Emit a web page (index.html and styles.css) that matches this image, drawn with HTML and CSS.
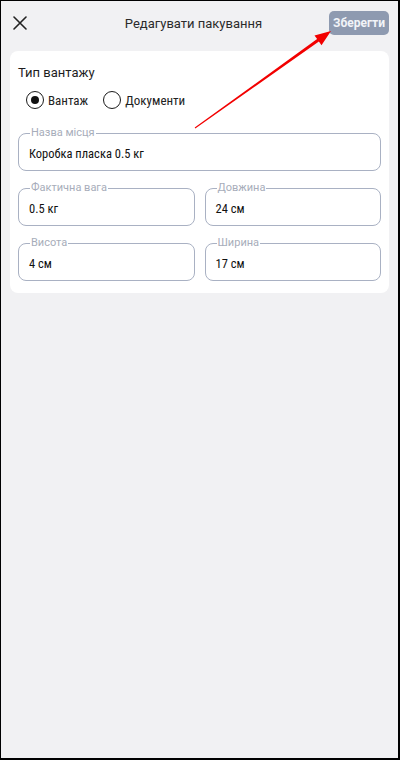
FILE: index.html
```html
<!DOCTYPE html>
<html lang="uk">
<head>
<meta charset="utf-8">
<link rel="stylesheet" href="styles.css">
</head>
<body>
<div class="frame">
  <header class="topbar">
    <button class="close" aria-label="Закрити">
      <svg width="14" height="14" viewBox="0 0 14 14"><path d="M1 1L13 13M13 1L1 13" stroke="#222" stroke-width="1.6" stroke-linecap="round"/></svg>
    </button>
    <div class="title">Редагувати пакування</div>
    <button class="save">Зберегти</button>
  </header>

  <main class="card">
    <div class="section-title">Тип вантажу</div>
    <div class="radios">
      <label class="radio"><span class="dot checked"></span><span class="rtext">Вантаж</span></label>
      <label class="radio"><span class="dot"></span><span class="rtext">Документи</span></label>
    </div>

    <div class="field">
      <span class="flabel">Назва місця</span>
      <span class="fvalue">Коробка пласка 0.5 кг</span>
    </div>

    <div class="grid">
      <div class="field">
        <span class="flabel">Фактична вага</span>
        <span class="fvalue">0.5 кг</span>
      </div>
      <div class="field">
        <span class="flabel">Довжина</span>
        <span class="fvalue">24 см</span>
      </div>
      <div class="field">
        <span class="flabel">Висота</span>
        <span class="fvalue">4 см</span>
      </div>
      <div class="field">
        <span class="flabel">Ширина</span>
        <span class="fvalue">17 см</span>
      </div>
    </div>
  </main>

  <svg class="arrow" width="400" height="760" viewBox="0 0 400 760">
    <polygon points="195.3,128.4 318.9,41.5 321.5,45.2 331,31 314.5,35.4 317.1,39.1 194.7,127.6" fill="#f20000"/>
  </svg>
</div>
</body>
</html>
```

FILE: styles.css
```css
* { box-sizing: border-box; }
html, body { margin: 0; padding: 0; }
body {
  font-family: Roboto, "Noto Sans", Arial, sans-serif;
  color: #1a1a1a;
}
.frame {
  position: relative;
  width: 400px;
  height: 760px;
  background: #f1f1f3;
  border-top: 1px solid #000;
  border-left: 1px solid #000;
  border-right: 2px solid #000;
  border-bottom: 2px solid #000;
  overflow: hidden;
}
.topbar {
  height: 50px;
  display: flex;
  align-items: center;
  padding: 0 9px 6px 11px;
}
.close {
  width: 16px;
  height: 16px;
  padding: 0;
  border: 0;
  background: transparent;
  display: flex;
  align-items: center;
  justify-content: center;
}
.title {
  flex: 1;
  text-align: center;
  font-size: 13px;
  color: #2b2b2b;
  padding-left: 30px;
}
.save {
  width: 60px;
  height: 24px;
  border: 0;
  border-radius: 5px;
  background: #8e9ab0;
  color: #f2f4f8;
  font-family: Roboto, Arial, sans-serif;
  font-weight: 700;
  font-size: 12px;
  padding: 0;
}
.card {
  margin: 0 9px;
  background: #fff;
  border-radius: 8px;
  padding: 13px 8px 12px;
  display: flex;
  flex-direction: column;
}
.section-title {
  font-size: 13px;
  line-height: 18px;
  color: #1e1e1e;
}
.radios {
  display: flex;
  gap: 15px;
  margin: 7px 0 0 8px;
  height: 22px;
  align-items: center;
}
.radio {
  display: flex;
  align-items: center;
  gap: 4px;
  color: #222;
}
.rtext {
  font-size: 13px;
  font-stretch: 75%;
}
.dot {
  width: 18px;
  height: 18px;
  border: 1.5px solid #1b1b1b;
  border-radius: 50%;
  display: flex;
  align-items: center;
  justify-content: center;
}
.dot.checked::after {
  content: "";
  width: 8px;
  height: 8px;
  border-radius: 50%;
  background: #111;
}
.field {
  position: relative;
  height: 38px;
  border: 1px solid #a9b1c3;
  border-radius: 8px;
  display: flex;
  align-items: center;
  padding: 2px 10px 0;
  margin-top: 22px;
}
.flabel {
  position: absolute;
  top: -7px;
  left: 11px;
  padding: 0 1px;
  background: #fff;
  font-size: 11px;
  line-height: 12px;
  color: #a7adba;
}
.fvalue {
  font-size: 12.5px;
  font-stretch: 75%;
  color: #111;
}
.grid {
  display: grid;
  grid-template-columns: 1fr 1fr;
  column-gap: 10px;
}
.grid .field { margin-top: 17px; }
.arrow {
  position: absolute;
  top: -1px;
  left: -1px;
  pointer-events: none;
}
```
